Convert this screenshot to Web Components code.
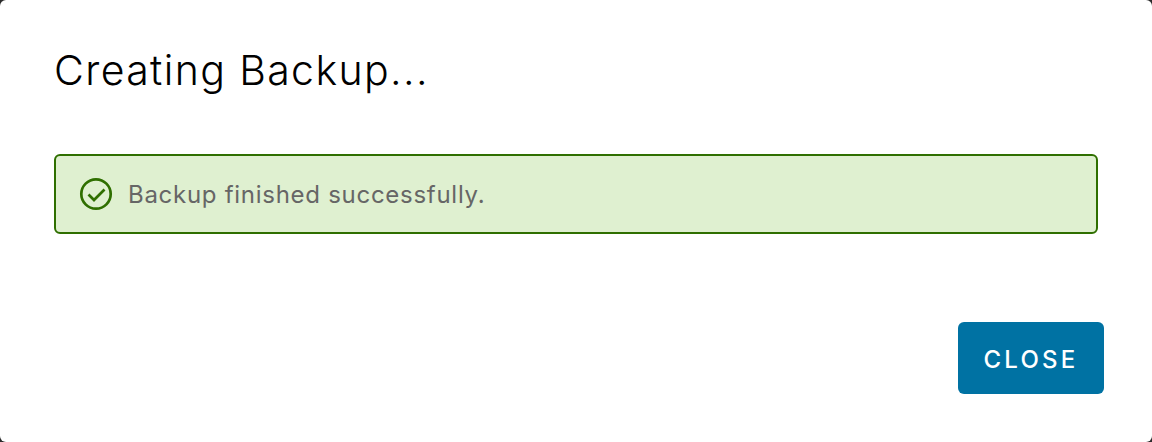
<!DOCTYPE html>
<html>
<head>
<meta charset="utf-8">
<style>
    html, body { margin: 0; height: 100%; background: #2b2b2b; overflow: hidden; }
    body { font-family: Inter, "Liberation Sans", sans-serif; }
</style>
</head>
<body>
<backup-modal>
    <span slot="title">Creating Backup...</span>
    <success-alert>Backup finished successfully.</success-alert>
    <action-button slot="actions">CLOSE</action-button>
</backup-modal>

<script>
class BackupModal extends HTMLElement {
    constructor() {
        super();
        this.attachShadow({mode: 'open'});
        this.shadowRoot.innerHTML = `
            <style>
                :host {
                    display: flex;
                    flex-direction: column;
                    box-sizing: border-box;
                    height: 442px;
                    background: #fff;
                    border-radius: 6px;
                    padding: 44px 48px 48px 54px;
                }
                header {
                    font-size: 41px;
                    line-height: 52px;
                    font-weight: 300;
                    color: #000;
                    letter-spacing: 1.38px;
                    height: 110px;
                }
                section { flex: 1; padding-right: 6px; }
                footer { display: flex; justify-content: flex-end; }
            </style>
            <header><slot name="title"></slot></header>
            <section><slot></slot></section>
            <footer><slot name="actions"></slot></footer>
        `;
    }
}

class SuccessAlert extends HTMLElement {
    constructor() {
        super();
        this.attachShadow({mode: 'open'});
        this.shadowRoot.innerHTML = `
            <style>
                :host {
                    display: flex;
                    align-items: center;
                    gap: 15px;
                    box-sizing: border-box;
                    height: 80px;
                    padding: 0 23px;
                    background: #dff0d0;
                    border: 2px solid #2f6f00;
                    border-radius: 6px;
                    color: #666;
                    font-size: 24px;
                    letter-spacing: .72px;
                }
                svg { width: 34px; height: 34px; flex: none; margin-top: -1px; }
            </style>
            <svg viewBox="0 0 34 34" fill="none" stroke="#2f6f00" stroke-width="2.7">
                <circle cx="17" cy="17" r="14.7"/>
                <path d="M9.5 17.5l5.5 5.5 10.5-10.5"/>
            </svg>
            <slot></slot>
        `;
    }
}

class ActionButton extends HTMLElement {
    constructor() {
        super();
        this.attachShadow({mode: 'open'});
        this.shadowRoot.innerHTML = `
            <style>
                :host { display: block; }
                button {
                    display: block;
                    box-sizing: border-box;
                    width: 146px;
                    height: 72px;
                    padding: 2px 0 0;
                    border: 0;
                    border-radius: 6px;
                    background: #0072a3;
                    color: #fff;
                    font: 500 24px Inter, "Liberation Sans", sans-serif;
                    letter-spacing: 3.2px;
                    cursor: pointer;
                }
            </style>
            <button><slot></slot></button>
        `;
    }
}

customElements.define('backup-modal', BackupModal);
customElements.define('success-alert', SuccessAlert);
customElements.define('action-button', ActionButton);
</script>
</body>
</html>
